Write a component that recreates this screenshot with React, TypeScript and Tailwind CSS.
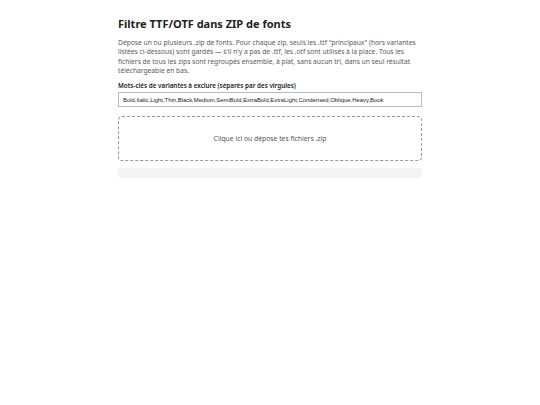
export default function App() {
  return (
    <div className="min-h-screen bg-white" style={{ fontFamily: '"Noto Sans", "Open Sans", sans-serif' }}>
      <div className="mx-auto w-[304px] pt-[15px]">
        <h1 className="text-[11px] font-bold leading-[18px] text-[#222]">Filtre TTF/OTF dans ZIP de fonts</h1>

        <p className="mt-[5px] text-[6.7px] leading-[9.3px] text-[#5a5a5a]">
          Dépose un ou plusieurs .zip de fonts. Pour chaque zip, seuls les .ttf "principaux" (hors variantes
          listées ci-dessous) sont gardés — s'il n'y a pas de .ttf, les .otf sont utilisés à la place. Tous les
          fichiers de tous les zips sont regroupés ensemble, à plat, sans aucun tri, dans un seul résultat
          téléchargeable en bas.
        </p>

        <label className="mt-[6px] block text-[6.3px] font-semibold leading-[9px] text-[#222]">
          Mots-clés de variantes à exclure (séparés par des virgules)
        </label>
        <input
          className="mt-[2px] block h-[15px] w-full border border-[#bbb] bg-white px-[4px] text-[5.9px] text-[#222] outline-none"
          style={{ fontFamily: '"Liberation Sans", Arial, sans-serif' }}
          defaultValue="Bold,Italic,Light,Thin,Black,Medium,SemiBold,ExtraBold,ExtraLight,Condensed,Oblique,Heavy,Book"
        />

        <div className="mt-[9px] flex h-[45px] items-center justify-center rounded-[4px] border border-dashed border-[#999] text-[6.8px] text-[#555]">
          Clique ici ou dépose tes fichiers .zip
        </div>

        <div className="mt-[7px] h-[10px] rounded-[3px] bg-[#f4f4f4]" />
      </div>
    </div>
  )
}
